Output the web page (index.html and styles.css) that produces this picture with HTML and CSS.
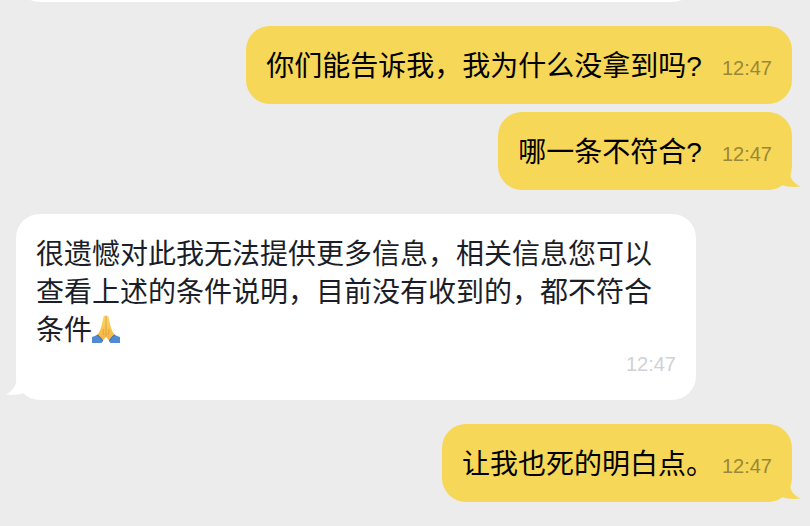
FILE: index.html
```html
<!DOCTYPE html>
<html lang="zh-CN">
<head>
    <meta charset="UTF-8">
    <meta name="viewport" content="width=device-width, initial-scale=1.0">
    <title>Chat</title>
    <link rel="stylesheet" href="styles.css">
</head>
<body>
    <main class="chat">
        <div class="message received wide"></div>

        <div class="message sent">
            <p class="text">你们能告诉我，我为什么没拿到吗?</p>
            <time class="time">12:47</time>
        </div>

        <div class="message sent grouped">
            <p class="text">哪一条不符合?</p>
            <time class="time">12:47</time>
            <svg class="tail" viewBox="0 0 24 20" aria-hidden="true">
                <path d="M14 0L13 4C14 10 18 14 23.500 16.500C17 17.500 10 17 5 15L2 8Z"/>
            </svg>
        </div>

        <div class="message received">
            <p class="text">很遗憾对此我无法提供更多信息，相关信息您可以查看上述的条件说明，目前没有收到的，都不符合条件<svg class="emoji" viewBox="0 0 28 28" role="img" aria-label="🙏">
                <defs>
                    <linearGradient id="skin" x1="0" y1="0" x2="0" y2="1">
                        <stop offset="0" stop-color="#ffd863"/>
                        <stop offset="1" stop-color="#f5b13c"/>
                    </linearGradient>
                </defs>
                <path fill="url(#skin)" d="M13.800 0.500C12 0 11.200 1.500 11 4L9.500 11C8.500 14 7.500 17 6 19L4.500 22L10 27L13.800 22Z"/>
                <path fill="url(#skin)" d="M14.200 0.500C16 0 16.800 1.500 17 4L18.500 11C19.500 14 20.500 17 22 19L23.500 22L18 27L14.200 22Z"/>
                <path fill="none" stroke="#c98a2e" stroke-width="0.800" d="M14 1V22"/>
                <path fill="none" stroke="#dc9630" stroke-width="0.700" d="M11.500 14C10.800 17 11 18.500 12 20M16.500 14C17.200 17 17 18.500 16 20"/>
                <path fill="#4f8ad2" d="M0 22C2 21.500 4 20.500 5.500 19.500C7.500 21 9.500 23.500 11 26L9.500 28H0Z"/>
                <path fill="#4f8ad2" d="M28 22C26 21.500 24 20.500 22.500 19.500C20.500 21 18.500 23.500 17 26L18.500 28H28Z"/>
                <path fill="none" stroke="#3569ae" d="M5.500 20C7.500 21.500 9.500 23.500 10.700 26M22.500 20C20.500 21.500 18.500 23.500 17.300 26"/>
            </svg></p>
            <time class="time">12:47</time>
            <svg class="tail" viewBox="0 0 24 20" aria-hidden="true">
                <path d="M12 0V2C11 8 7 12 2 14.500C8 15.500 15 15 19 13L22 6Z"/>
            </svg>
        </div>

        <div class="message sent tight">
            <p class="text">让我也死的明白点。</p>
            <time class="time">12:47</time>
            <svg class="tail" viewBox="0 0 24 20" aria-hidden="true">
                <path d="M14 0L13 4C14 10 18 14 23.500 16.500C17 17.500 10 17 5 15L2 8Z"/>
            </svg>
        </div>
    </main>
</body>
</html>
```
FILE: styles.css
```css
* {
    box-sizing: border-box;
}

body {
    margin: 0;
    background-color: #ececec;
    font-family: "Liberation Sans", "Noto Sans CJK SC", sans-serif;
}

/* the thread is scrolled to its end, older messages run off the top */
.chat {
    display: flex;
    flex-direction: column;
    justify-content: flex-end;
    gap: 24px;
    height: 100vh;
    padding: 0 18px 24px 16px;
    overflow: hidden;
}

.message {
    position: relative;
    display: flex;
    flex-shrink: 0;
    max-width: 680px;
    min-height: 78px;
    padding: 22px 20px 18px;
    border-radius: 24px;
}

.sent {
    align-self: flex-end;
    align-items: center;
    gap: 20px;
    background-color: #f6d757;
    color: #000;
}

.received {
    align-self: flex-start;
    flex-direction: column;
    background-color: #fff;
    color: #1b1e29;
}

.wide {
    width: 100%;
}

.grouped {
    margin-top: -16px;
}

/* a full stop already leaves blank space before the time */
.tight {
    gap: 8px;
}

.text {
    margin: 0;
    font-size: 28px;
    line-height: 38px;
}

.time {
    font-size: 20px;
    line-height: 28px;
}

.sent .time {
    padding-top: 2px;
    color: #9a8737;
}

.received .time {
    align-self: flex-end;
    margin-bottom: 4px;
    color: #cfd1d7;
}

.emoji {
    width: 28px;
    height: 28px;
    vertical-align: -3px;
}

.tail {
    position: absolute;
    bottom: 0;
    width: 24px;
    height: 20px;
}

.sent .tail {
    right: -9px;
    fill: #f6d757;
}

.received .tail {
    left: -12px;
    fill: #fff;
}
```
